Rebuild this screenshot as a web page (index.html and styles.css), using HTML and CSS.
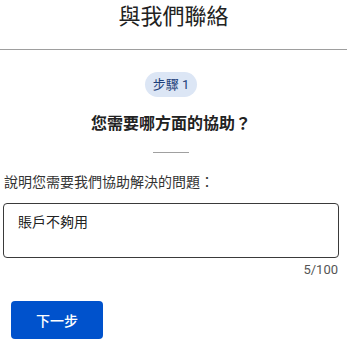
FILE: index.html
```html
<!DOCTYPE html>
<html lang="zh-Hant">
  <head>
    <meta charset="UTF-8" />
    <meta name="viewport" content="width=device-width, initial-scale=1.0" />
    <title>與我們聯絡</title>
    <link rel="stylesheet" href="styles.css">
  </head>
  <body>
    <header class="page-title">與我們聯絡</header>

    <main class="form">
      <div class="step">
        <span class="step-badge">步驟 1</span>
        <h2>您需要哪方面的協助？</h2>
        <div class="step-rule"></div>
      </div>

      <label class="field-label" for="problem">說明您需要我們協助解決的問題：</label>
      <div class="field-box">
        <textarea id="problem" maxlength="100">賬戶不夠用</textarea>
      </div>
      <div class="counter">5/100</div>

      <button class="next-btn">下一步</button>
    </main>
  </body>
</html>
```

FILE: styles.css
```css
body {
  margin: 0;
  padding: 0;
  background: #fff;
  color: #222;
  font-family: Roboto, "Noto Sans CJK TC", sans-serif;
}

.page-title {
  height: 36px;
  font-size: 22px;
  line-height: 34px;
  text-align: center;
  color: #222;
  border-bottom: 1px solid #9e9e9e;
  padding-bottom: 13px;
}

.form {
  width: 336px;
  margin-left: 3px;
}

.step {
  display: flex;
  flex-direction: column;
  align-items: center;
  padding-top: 22px;
}

.step-badge {
  background: #dce6f5;
  color: #1c3f7a;
  font-size: 13px;
  line-height: 25px;
  height: 25px;
  padding: 0 8px;
  border-radius: 13px;
}

.step h2 {
  margin: 15px 0 0;
  font-size: 16px;
  line-height: 24px;
  font-weight: bold;
  color: #222;
}

.step-rule {
  width: 36px;
  height: 1px;
  background: #a0a0a0;
  margin-top: 16px;
}

.field-label {
  display: block;
  margin: 19px 0 0 1px;
  font-size: 14px;
  line-height: 20px;
  color: #333;
}

.field-box {
  margin-top: 11px;
  border: 1px solid #3a3a3a;
  border-radius: 4px;
  height: 53px;
}

.field-box textarea {
  display: block;
  width: 100%;
  height: 100%;
  box-sizing: border-box;
  border: none;
  outline: none;
  resize: none;
  background: transparent;
  padding: 8px 14px;
  font-family: inherit;
  font-size: 14px;
  line-height: 20px;
  color: #222;
}

.counter {
  margin-top: 3px;
  text-align: right;
  font-size: 13px;
  line-height: 18px;
  color: #555;
  padding-right: 1px;
}

.next-btn {
  display: block;
  margin: 22px 0 0 8px;
  width: 92px;
  height: 38px;
  border: none;
  border-radius: 4px;
  background: #0052cc;
  color: #fff;
  font-family: inherit;
  font-size: 14px;
  font-weight: 500;
  cursor: pointer;
}
```
